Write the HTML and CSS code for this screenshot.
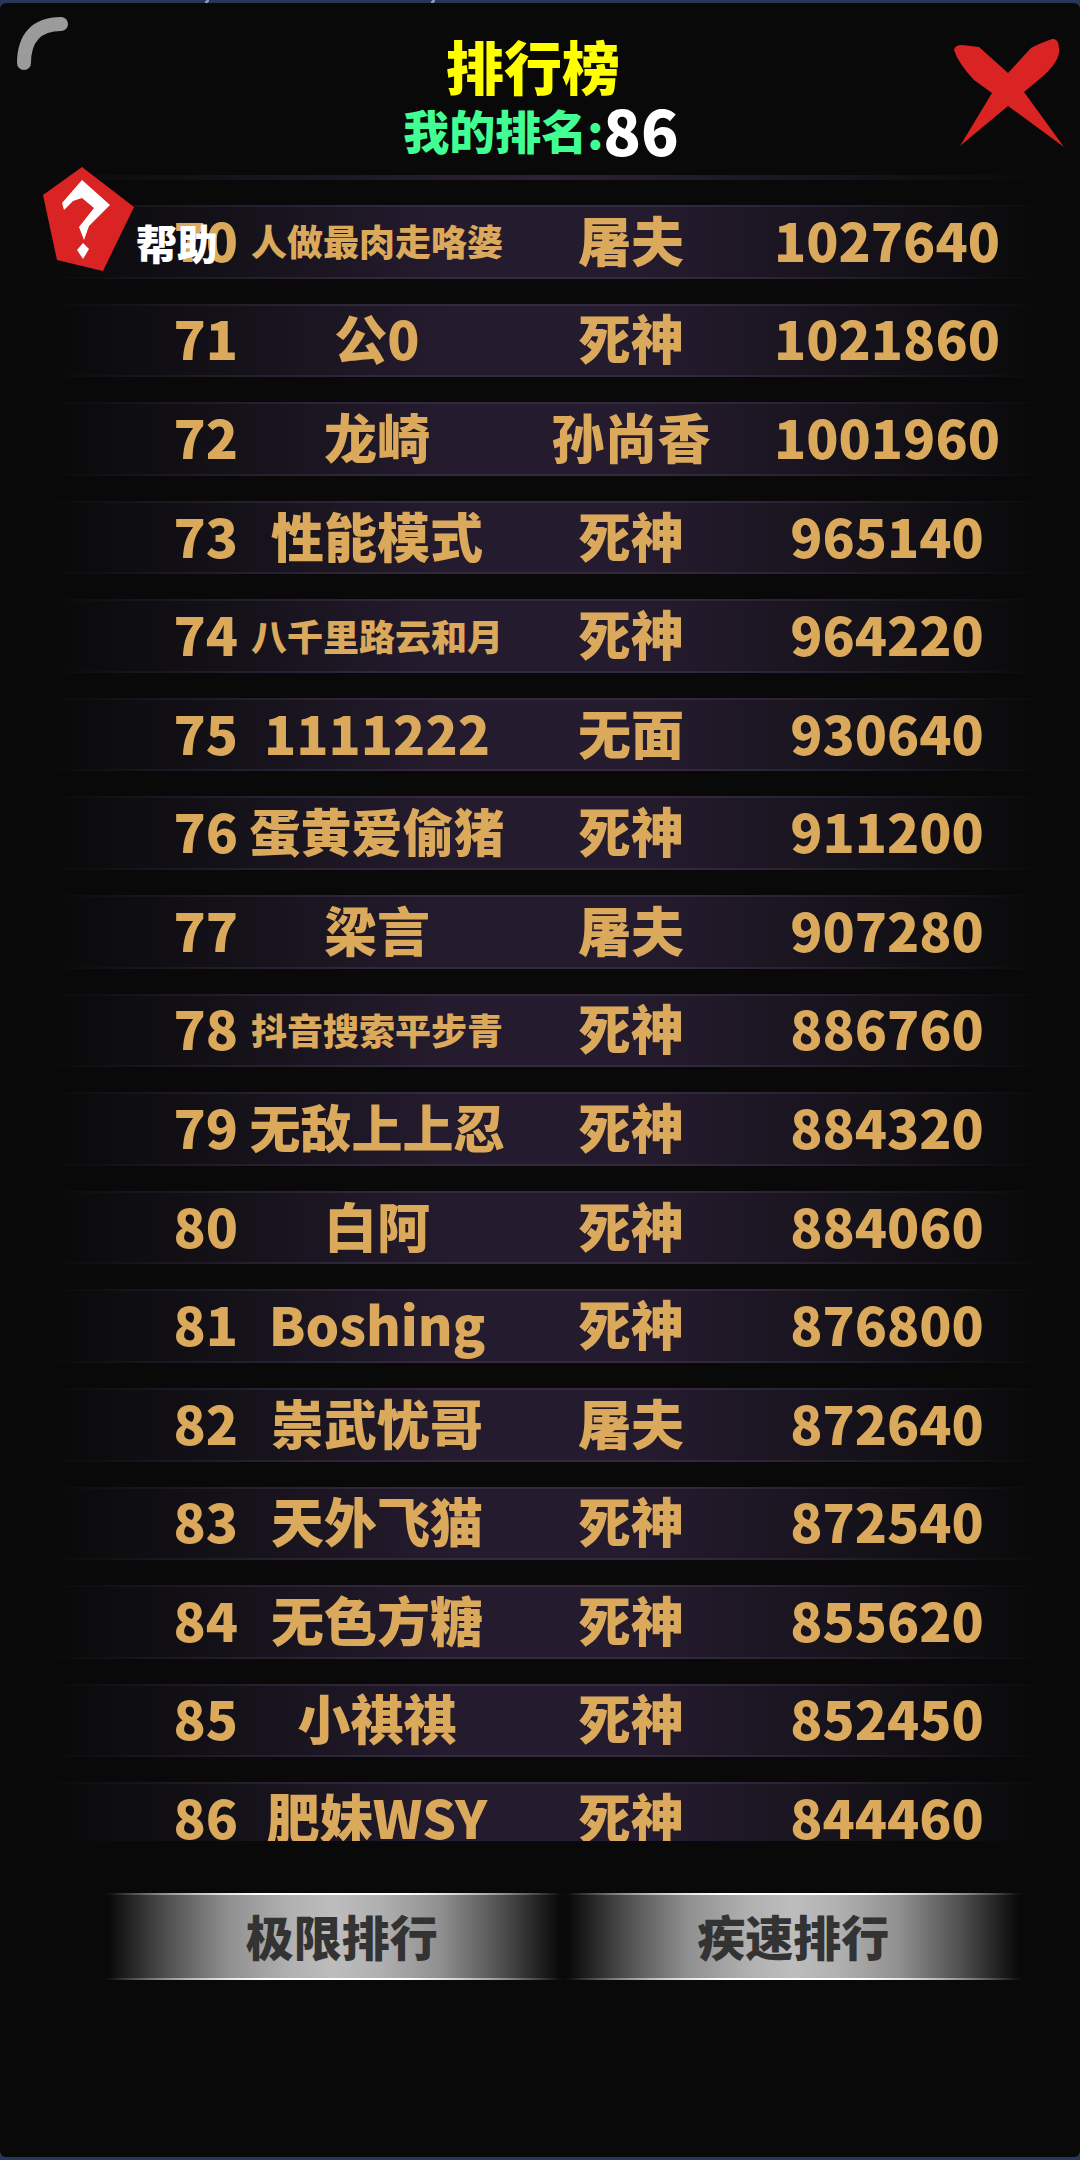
FILE: index.html
```html
<!DOCTYPE html>
<html lang="zh-CN">

<head>
    <meta charset="UTF-8">
    <meta name="viewport" content="width=device-width, initial-scale=1.0">
    <link rel="stylesheet" href="styles.css">
    <title>排行榜</title>
</head>

<body>
    <div class="panel">
        <svg class="spinner" width="52" height="54" viewBox="0 0 52 54">
            <path d="M7 46 C7 20 20 7 44 7" fill="none" stroke="#9b9b9b" stroke-width="14" stroke-linecap="round" />
        </svg>

        <div class="header">
            <h1>排行榜</h1>
            <p class="myRank">我的排名:<span>86</span></p>
        </div>

        <button class="closeB" type="button" aria-label="关闭">
            <svg width="110" height="112" viewBox="0 0 110 112">
                <path d="M0 11 Q1 6 8 6 L25 8 L54 34 L77 9 Q84 5 98 0 Q106 -1 105 14 Q103 25 88 38 L70 53 L110 108 L54 67 L6 107 L38 54 L20 41 Q4 24 0 11 Z" fill="#da2424" />
            </svg>
        </button>

        <button class="helpB" type="button">
            <svg width="91" height="105" viewBox="0 0 91 105">
                <path d="M39 0 L91 40 L60 104 L14 93 L0 28 Z" fill="#da2424" />
                <path d="M39 13 L67 38 L46 59 L41 73 L36 60 L51 41 L39 31 L30 34 L21 43 L19 36 Z" fill="#fff" />
                <path d="M40 76 L46 82 L40 92 L34 83 Z" fill="#fff" />
            </svg>
            <span>帮助</span>
        </button>

        <div class="list">
            <table>
                <tbody>
                    <tr><td>70</td><td class="long">人做最肉走咯婆</td><td>屠夫</td><td>1027640</td></tr>
                    <tr><td>71</td><td>公0</td><td>死神</td><td>1021860</td></tr>
                    <tr><td>72</td><td>龙崎</td><td>孙尚香</td><td>1001960</td></tr>
                    <tr><td>73</td><td>性能模式</td><td>死神</td><td>965140</td></tr>
                    <tr><td>74</td><td class="long">八千里路云和月</td><td>死神</td><td>964220</td></tr>
                    <tr><td>75</td><td>1111222</td><td>无面</td><td>930640</td></tr>
                    <tr><td>76</td><td class="medium">蛋黄爱偷猪</td><td>死神</td><td>911200</td></tr>
                    <tr><td>77</td><td>梁言</td><td>屠夫</td><td>907280</td></tr>
                    <tr><td>78</td><td class="long">抖音搜索平步青</td><td>死神</td><td>886760</td></tr>
                    <tr><td>79</td><td class="medium">无敌上上忍</td><td>死神</td><td>884320</td></tr>
                    <tr><td>80</td><td>白阿</td><td>死神</td><td>884060</td></tr>
                    <tr><td>81</td><td>Boshing</td><td>死神</td><td>876800</td></tr>
                    <tr><td>82</td><td>崇武忧哥</td><td>屠夫</td><td>872640</td></tr>
                    <tr><td>83</td><td>天外飞猫</td><td>死神</td><td>872540</td></tr>
                    <tr><td>84</td><td>无色方糖</td><td>死神</td><td>855620</td></tr>
                    <tr><td>85</td><td>小祺祺</td><td>死神</td><td>852450</td></tr>
                    <tr><td>86</td><td>肥妹WSY</td><td>死神</td><td>844460</td></tr>
                </tbody>
            </table>
        </div>

        <div class="tabs">
            <button type="button">极限排行</button>
            <button type="button">疾速排行</button>
        </div>
    </div>
</body>

</html>
```
FILE: styles.css
```css
* {
    box-sizing: border-box;
}

body {
    margin: 0;
    padding: 3px 0;
    background:
        linear-gradient(120deg, transparent 30%, #7f9ab5 30%, #7f9ab5 70%, transparent 70%) 19% 0 / 6px 3px no-repeat,
        linear-gradient(120deg, transparent 30%, #7f9ab5 30%, #7f9ab5 70%, transparent 70%) 40% 0 / 6px 3px no-repeat,
        #26375a;
    font-family: "Noto Sans CJK SC", sans-serif;
    font-weight: 900;
}

button {
    padding: 0;
    border: none;
    background: none;
    font: inherit;
    cursor: pointer;
}

svg {
    display: block;
}

.panel {
    position: relative;
    display: flex;
    flex-direction: column;
    height: calc(100vh - 6px);
    border-radius: 6px;
    background: #090909;
    overflow: hidden;
}

/* header */

.header {
    height: 172px;
    padding: 30px 14px 0 0;
    text-align: center;
}

h1 {
    margin: 0;
    font-size: 58px;
    font-weight: 900;
    line-height: 64px;
    color: #ffff00;
}

.myRank {
    display: flex;
    justify-content: center;
    margin: 0;
    padding-left: 16px;
    font-size: 46px;
    line-height: 64px;
    color: #42ff94;
}

.myRank span {
    font-size: 62px;
    color: #fff;
}

/* these float over the header and the first row */

.spinner {
    position: absolute;
    top: 14px;
    left: 17px;
}

.closeB {
    position: absolute;
    top: 36px;
    right: 16px;
}

.helpB {
    position: absolute;
    top: 164px;
    left: 43px;
    z-index: 1;
    display: flex;
    align-items: flex-end;
    gap: 2px;
    font-size: 41px;
    line-height: 60px;
    color: #fff;
}

/* ranking list */

.list {
    flex: 1;
    margin: 0 35px 0 45px;
    overflow: hidden;
}

/* lower edge of the row that is scrolled away */
.list::before {
    content: "";
    display: block;
    height: 5px;
    background: linear-gradient(to right, transparent, #2c2236 50%, transparent);
}

table {
    width: 100%;
    height: 1701px;
    table-layout: fixed;
    border-spacing: 0 25px;
}

tr {
    background:
        linear-gradient(to right, transparent, #342a3f 40%, #342a3f 60%, transparent) top / 100% 2px no-repeat,
        linear-gradient(to right, transparent, #342a3f 40%, #342a3f 60%, transparent) bottom / 100% 2px no-repeat,
        linear-gradient(to right, transparent, #15121a 20%, #251b2e 40%, #251b2e 60%, #15121a 82%, transparent);
}

td {
    padding: 0 0 6px;
    font-size: 53px;
    line-height: 66px;
    text-align: center;
    white-space: nowrap;
    color: #dba95c;
}

td:nth-child(1) {
    width: 20%;
    padding-right: 7px;
    text-align: right;
}

td:nth-child(2) {
    width: 26%;
    padding-left: 4px;
}

td:nth-child(3) {
    width: 25%;
    padding-left: 2px;
}

td:nth-child(4) {
    padding-right: 26px;
}

td.medium {
    font-size: 51px;
}

td.long {
    padding-bottom: 3px;
    font-size: 36px;
}

/* bottom buttons */

.tabs {
    display: flex;
    height: 316px;
    padding: 52px 57px 0 104px;
}

.tabs button {
    width: 50%;
    height: 87px;
    padding-bottom: 4px;
    font-size: 48px;
    line-height: 80px;
    color: #333;
    background:
        linear-gradient(to right, transparent, #fff 35%, #fff 65%, transparent) top / 100% 2px no-repeat,
        linear-gradient(to right, transparent, #fff 35%, #fff 65%, transparent) bottom / 100% 2px no-repeat,
        linear-gradient(to right, #090909 1%, #4c4c4c 13%, #909090 27%, #b0b0b0 40%, #bdbdbd 50%, #b0b0b0 60%, #909090 73%, #4c4c4c 87%, #090909 99%);
}

.tabs button:first-child {
    padding-left: 16px;
}
```
